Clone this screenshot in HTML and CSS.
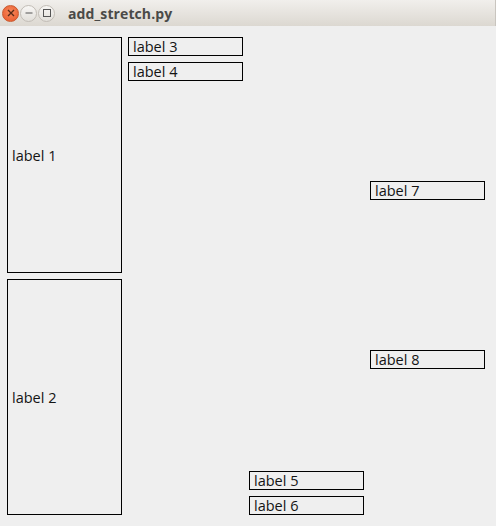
FILE: index.html
```html
<!DOCTYPE html>
<html lang="en">
<head>
    <meta charset="UTF-8">
    <meta name="viewport" content="width=device-width, initial-scale=1.0">
    <title>add_stretch.py</title>
    <link rel="stylesheet" href="styles.css">
</head>
<body>
    <div class="window">
        <header class="titlebar">
            <div class="controls">
                <span class="btn btn-close">
                    <svg width="8" height="8" viewBox="0 0 8 8"><path d="M1 1 L7 7 M7 1 L1 7" stroke="#5a2a18" stroke-width="1.4"/></svg>
                </span>
                <span class="btn">
                    <svg width="8" height="8" viewBox="0 0 8 8"><path d="M0.5 4 H7.5" stroke="#555" stroke-width="1"/></svg>
                </span>
                <span class="btn">
                    <svg width="8" height="8" viewBox="0 0 8 8"><rect x="0.5" y="0.5" width="7" height="7" fill="none" stroke="#555" stroke-width="1"/></svg>
                </span>
            </div>
            <span class="title">add_stretch.py</span>
        </header>

        <main class="content">
            <!-- column 1: two big labels sharing the height -->
            <div class="column">
                <div class="label big">label 1</div>
                <div class="label big">label 2</div>
            </div>
            <!-- column 2: stretch at the end -->
            <div class="column">
                <div class="label">label 3</div>
                <div class="label">label 4</div>
                <div class="stretch"></div>
            </div>
            <!-- column 3: stretch at the start -->
            <div class="column">
                <div class="stretch"></div>
                <div class="label">label 5</div>
                <div class="label">label 6</div>
            </div>
            <!-- column 4: stretches around each label -->
            <div class="column">
                <div class="stretch"></div>
                <div class="label">label 7</div>
                <div class="stretch"></div>
                <div class="label">label 8</div>
                <div class="stretch last"></div>
            </div>
        </main>
    </div>
</body>
</html>
```

FILE: styles.css
```css
html, body {
    margin: 0;
    padding: 0;
    background: #efefef;
}
body {
    width: 496px;
    height: 526px;
    overflow: hidden;
    font-family: "Open Sans", "DejaVu Sans", sans-serif;
    color: #141414;
}
.window {
    display: flex;
    flex-direction: column;
    height: 526px;
}
.titlebar {
    height: 26px;
    flex: none;
    display: flex;
    align-items: center;
    background: linear-gradient(to bottom, #f1efec, #dcd8d1);
    border-right: 1px solid #c9c5bf;
    box-sizing: border-box;
}
.controls {
    display: flex;
    align-items: center;
    gap: 1px;
    padding-left: 2px;
}
.btn {
    width: 17px;
    height: 17px;
    border-radius: 50%;
    box-sizing: border-box;
    border: 1px solid #c2bdb6;
    background: linear-gradient(to bottom, #f8f7f5, #e2dfda);
    display: flex;
    align-items: center;
    justify-content: center;
}
.btn-close {
    border-color: #c95a30;
    background: radial-gradient(circle at 50% 40%, #f7895a, #e8562a);
}
.title {
    margin-left: 13px;
    font-weight: bold;
    font-size: 14px;
    color: #4a4a48;
    letter-spacing: 0.1px;
}
.content {
    flex: 1;
    display: flex;
    gap: 6px;
    padding: 11px 11px 11px 7px;
}
.column {
    width: 115px;
    display: flex;
    flex-direction: column;
    gap: 6px;
}
.stretch {
    flex: 138;
}
.stretch.last {
    flex: 140;
}
.label {
    height: 19px;
    box-sizing: border-box;
    border: 1px solid #000;
    padding-left: 4px;
    font-size: 14.5px;
    line-height: 17px;
    white-space: nowrap;
}
.label.big {
    flex: 1;
    height: auto;
    display: flex;
    align-items: center;
}
```
